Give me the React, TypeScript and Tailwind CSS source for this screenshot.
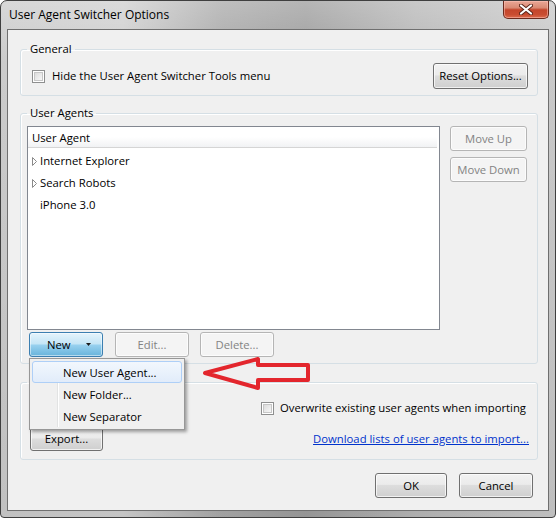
import React from 'react';

function Checkbox() {
  return (
    <div className="w-[13px] h-[13px] shrink-0 border border-[#8e8f8f] bg-white p-[1px]">
      <div className="w-full h-full border border-[#c6c6c6] bg-[linear-gradient(135deg,#dcdcdc,#f7f7f7)]" />
    </div>
  );
}

function Button({
  children,
  disabled,
  className = '',
}: {
  children?: React.ReactNode;
  disabled?: boolean;
  className?: string;
}) {
  const look = disabled
    ? 'border-[#b5b5b5] bg-[#f4f4f4] text-[#838383]'
    : 'border-[#707070] bg-[linear-gradient(#f2f2f2_0%,#ebebeb_45%,#dddddd_50%,#cfcfcf_100%)] text-black';
  return (
    <div
      className={`flex items-center justify-center rounded-[3px] border shadow-[inset_0_0_0_1px_rgba(255,255,255,0.7)] ${look} ${className}`}
    >
      {children}
    </div>
  );
}

function Row({ label, folder }: { label: string; folder?: boolean }) {
  return (
    <div className="h-[22px] flex items-center pl-[4px]">
      <div className="w-[5px] h-[9px] flex items-center">
        {folder && (
          <svg width="5" height="9" viewBox="0 0 5 9">
            <path d="M0.5 0.5 L4.5 4.5 L0.5 8.5 Z" fill="none" stroke="#8a8a8a" strokeWidth="1" />
          </svg>
        )}
      </div>
      <span className="ml-[3px]">{label}</span>
    </div>
  );
}

export default function App() {
  return (
    <div className="w-[556px] h-[518px] bg-white font-['Open_Sans',sans-serif] text-[11.3px] leading-[16px] text-black">
      <div className="w-full h-full flex flex-col rounded-t-[7px] rounded-b-[4px] border border-[#3f3f3f] bg-[linear-gradient(180deg,rgba(255,255,255,0.25)_0%,rgba(255,255,255,0)_12%,rgba(0,0,0,0.05)_100%),linear-gradient(90deg,#cbcbcb_0%,#cfcfcf_22%,#a9a9a9_40%,#9d9d9d_55%,#b7b7b7_75%,#c9c9c9_100%)]">
        {/* title bar */}
        <div className="h-[28px] shrink-0 flex items-start">
          <span className="pl-[8px] pt-[6px] text-[12px]">User Agent Switcher Options</span>
          <div className="ml-auto mr-[6px] w-[46px] h-[18px] flex items-center justify-center rounded-b-[5px] border border-t-0 border-[#6b2a1d] bg-[linear-gradient(#eaa796_0%,#d98a74_40%,#c4452b_52%,#c94d31_80%,#db6a4c_100%)] shadow-[inset_0_0_0_1px_rgba(255,200,190,0.5)]">
            <svg width="14" height="11" viewBox="0 0 14 11">
              <path d="M2 1.5 L12 9.5 M12 1.5 L2 9.5" stroke="#5a2418" strokeWidth="4" strokeLinecap="round" />
              <path d="M2 1.5 L12 9.5 M12 1.5 L2 9.5" stroke="#ffffff" strokeWidth="2.2" strokeLinecap="round" />
            </svg>
          </div>
        </div>

        {/* client area */}
        <div className="flex-1 mx-[6px] mb-[6px] border border-[#6f6f6f] bg-[#f0f0f0] pl-[12px] pr-[10px] pt-[11px] flex flex-col">
          <fieldset className="border border-[#d5dfe5] rounded-[3px] shadow-[inset_1px_1px_0_#fff]">
            <legend className="ml-[6px] px-[3px]">General</legend>
            <div className="flex items-center pl-[11px] pr-[9px] pt-[6px] pb-[6px]">
              <Checkbox />
              <span className="ml-[7px]">Hide the User Agent Switcher Tools menu</span>
              <Button className="ml-auto w-[95px] h-[26px]">Reset Options...</Button>
            </div>
          </fieldset>

          <fieldset className="mt-[9px] border border-[#d5dfe5] rounded-[3px] shadow-[inset_1px_1px_0_#fff]">
            <legend className="ml-[6px] px-[3px]">User Agents</legend>
            <div className="pl-[6px] pr-[9px] pt-[5px] pb-[6px]">
              <div className="flex gap-[10px]">
                <div className="w-[413px] h-[204px] border border-[#828790] bg-white">
                  <div className="h-[21px] mr-[2px] flex items-center pl-[4px] pt-[1px] border-b border-[#d5d5d5] bg-[linear-gradient(#ffffff_0%,#ffffff_50%,#f1f2f4_100%)]">
                    User Agent
                  </div>
                  <div className="pt-[2px]">
                    <Row label="Internet Explorer" folder />
                    <Row label="Search Robots" folder />
                    <Row label="iPhone 3.0" />
                  </div>
                </div>
                <div className="w-[77px] flex flex-col gap-[6px]">
                  <Button disabled className="h-[25px]">Move Up</Button>
                  <Button disabled className="h-[25px]">Move Down</Button>
                </div>
              </div>
              <div className="flex mt-[2px] pl-[2px]">
                <div className="relative">
                  <div className="w-[74px] h-[25px] flex items-center rounded-[3px] border border-[#3c7fb1] bg-[linear-gradient(#e5f4fc_0%,#c4e5f6_48%,#98d1ef_52%,#68b3db_100%)] shadow-[inset_0_0_0_1px_rgba(255,255,255,0.5)]">
                    <span className="pl-[17px]">New</span>
                    <svg className="ml-[15px]" width="5" height="3" viewBox="0 0 5 3">
                      <path d="M0 0 H5 L2.5 3 Z" fill="#1a1a1a" />
                    </svg>
                  </div>

                  {/* dropdown menu */}
                  <div className="absolute left-0 top-[26px] z-10 w-[156px] h-[72px] border border-[#979797] bg-[#f0f0f0] p-[2px] shadow-[2px_2px_3px_rgba(0,0,0,0.35)]">
                    <div className="absolute left-[27px] top-[2px] bottom-[2px] w-[2px] border-l border-[#e2e3e3] bg-white" />
                    <div className="relative h-[22px] flex items-center pl-[30px] pt-[2px] rounded-[3px] border border-[#aecff7] bg-[linear-gradient(#f2f7fd,#e1ecfa)]">
                      New User Agent...
                    </div>
                    <div className="relative h-[22px] flex items-center pl-[31px] pt-[2px]">New Folder...</div>
                    <div className="relative h-[22px] flex items-center pl-[31px] pt-[2px]">New Separator</div>
                  </div>

                  {/* red arrow */}
                  <svg
                    className="absolute left-[171px] top-[20px] z-10"
                    width="114"
                    height="42"
                    viewBox="0 0 114 42"
                  >
                    <path
                      d="M5 21 L58 7 L58 13 L108 13 L108 28 L58 28 L58 36 Z"
                      fill="none"
                      stroke="#e3262d"
                      strokeWidth="4"
                      strokeLinejoin="round"
                    />
                  </svg>
                </div>
                <Button disabled className="ml-[12px] w-[74px] h-[25px]">Edit...</Button>
                <Button disabled className="ml-[11px] w-[74px] h-[25px]">Delete...</Button>
              </div>
            </div>
          </fieldset>

          <fieldset className="mt-[10px] border border-[#d5dfe5] rounded-[3px] shadow-[inset_1px_1px_0_#fff]">
            <legend className="ml-[6px] px-[3px]">
              <span className="block w-[70px] h-[16px]" />
            </legend>
            <div className="flex pl-[9px] pr-[8px] pt-[6px] pb-[8px]">
              <div className="flex flex-col gap-[7px]">
                <Button className="w-[73px] h-[24px]" />
                <Button className="w-[73px] h-[24px]">Export...</Button>
              </div>
              <div className="ml-auto flex flex-col items-end">
                <div className="h-[24px] mr-[3px] flex items-center">
                  <Checkbox />
                  <span className="ml-[6px]">Overwrite existing user agents when importing</span>
                </div>
                <a className="mt-[7px] h-[24px] flex items-center text-[#0033cc] underline">
                  Download lists of user agents to import...
                </a>
              </div>
            </div>
          </fieldset>

          <div className="mt-[13px] pr-[5px] flex justify-end gap-[12px]">
            <Button className="w-[72px] h-[25px]">OK</Button>
            <Button className="w-[74px] h-[25px]">Cancel</Button>
          </div>
        </div>
      </div>
    </div>
  );
}
